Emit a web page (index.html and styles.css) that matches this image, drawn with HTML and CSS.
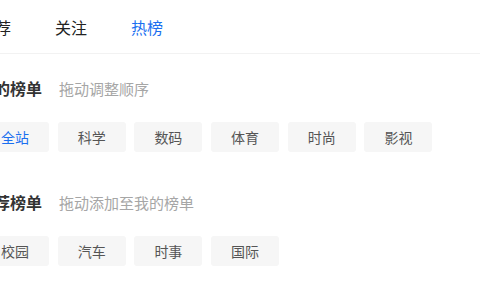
FILE: index.html
```html
<!DOCTYPE html>
<html lang="zh">
<head>
<meta charset="utf-8">
<link rel="stylesheet" href="styles.css">
</head>
<body>
<div class="page">
  <nav class="tabs">
    <span class="tab">推荐</span>
    <span class="tab">关注</span>
    <span class="tab active">热榜</span>
  </nav>
  <section class="section first">
    <div class="head"><span class="title">我的榜单</span><span class="sub">拖动调整顺序</span></div>
    <div class="chips">
      <span class="chip active">全站</span>
      <span class="chip">科学</span>
      <span class="chip">数码</span>
      <span class="chip">体育</span>
      <span class="chip">时尚</span>
      <span class="chip">影视</span>
    </div>
  </section>
  <section class="section second">
    <div class="head"><span class="title">推荐榜单</span><span class="sub">拖动添加至我的榜单</span></div>
    <div class="chips">
      <span class="chip">校园</span>
      <span class="chip">汽车</span>
      <span class="chip">时事</span>
      <span class="chip">国际</span>
    </div>
  </section>
</div>
</body>
</html>
```
FILE: styles.css
```css
html, body {
  margin: 0;
  padding: 0;
  background: #fff;
  overflow: hidden;
}
body {
  font-family: "Noto Sans CJK SC", "Noto Sans", sans-serif;
  color: #333;
}
.page {
  margin-left: -22px;
  width: 520px;
}
.tabs {
  display: flex;
  gap: 44px;
  height: 53px;
  align-items: center;
  padding-left: 1px;
  border-bottom: 1px solid #f2f2f2;
}
.tab {
  font-size: 16px;
  line-height: 22px;
  color: #222;
}
.tab.active {
  color: #1a6ff0;
}
.section.first {
  padding-top: 22px;
}
.section.second {
  padding-top: 38px;
}
.head {
  display: flex;
  align-items: center;
  height: 24px;
}
.title {
  font-size: 16px;
  font-weight: 700;
  color: #333;
}
.sub {
  margin-left: 17px;
  font-size: 15px;
  color: #a6a6a6;
}
.chips {
  display: flex;
  gap: 8.7px;
  margin-top: 22px;
  padding-left: 3px;
}
.chip {
  width: 68px;
  height: 30px;
  display: flex;
  align-items: center;
  justify-content: center;
  background: #f6f6f6;
  border-radius: 3px;
  font-size: 14px;
  color: #555;
}
.chip.active {
  color: #1a6ff0;
}
```
